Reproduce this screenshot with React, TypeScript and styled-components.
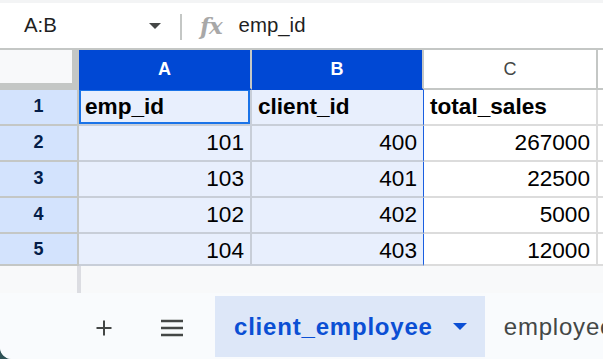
import React from 'react';
import styled, { createGlobalStyle } from 'styled-components';

const GlobalStyle = createGlobalStyle`
  html, body {
    margin: 0;
    padding: 0;
    background: #2f5256;
  }
  * {
    box-sizing: border-box;
  }
`;

type Col = 'A' | 'B' | 'C' | 'D';

const rows: { n: number; cells: [string, string, string]; header?: boolean }[] = [
  { n: 1, cells: ['emp_id', 'client_id', 'total_sales'], header: true },
  { n: 2, cells: ['101', '400', '267000'] },
  { n: 3, cells: ['103', '401', '22500'] },
  { n: 4, cells: ['102', '402', '5000'] },
  { n: 5, cells: ['104', '403', '12000'] },
];

const App: React.FC = () => {
  return (
    <>
      <GlobalStyle />
      <Page>
        <FormulaBar>
          <NameBox>
            <span>A:B</span>
            <Caret />
          </NameBox>
          <Divider />
          <Fx>fx</Fx>
          <FormulaText>emp_id</FormulaText>
        </FormulaBar>

        <Grid>
          <Corner />
          {(['A', 'B', 'C', 'D'] as Col[]).map((c) => (
            <ColHeader key={c} $selected={c === 'A' || c === 'B'} $last={c === 'D'}>
              {c === 'D' ? '' : c}
            </ColHeader>
          ))}

          {rows.map((r) => (
            <React.Fragment key={r.n}>
              <RowHeader $short={r.n === 5}>{r.n}</RowHeader>
              {r.cells.map((v, i) => (
                <Cell
                  key={i}
                  $selected={i < 2}
                  $active={r.n === 1 && i === 0}
                  $edge={i === 1}
                  $bold={!!r.header}
                >
                  {v}
                </Cell>
              ))}
              <Cell $last />
            </React.Fragment>
          ))}
        </Grid>

        <ScrollStrip>
          <StripLeft />
        </ScrollStrip>

        <TabBar>
          <IconButton aria-label="Add sheet">
            <svg width="18" height="18" viewBox="0 0 18 18">
              <path d="M9 1.5v15M1.5 9h15" stroke="#444746" strokeWidth="2" />
            </svg>
          </IconButton>
          <IconButton aria-label="All sheets">
            <svg width="24" height="18" viewBox="0 0 24 18">
              <path d="M1 2h22M1 9h22M1 16h22" stroke="#444746" strokeWidth="2.4" />
            </svg>
          </IconButton>
          <Tab $active>
            client_employee
            <TabCaret />
          </Tab>
          <Tab>employee</Tab>
        </TabBar>
      </Page>
    </>
  );
};

export default App;

const Page = styled.div`
  width: 603px;
  height: 359px;
  background: #ffffff;
  display: flex;
  flex-direction: column;
  overflow: hidden;
  border-bottom-left-radius: 12px;
  font-family: 'Liberation Sans', Arial, sans-serif;
`;

const FormulaBar = styled.div`
  height: 50px;
  flex: none;
  display: flex;
  align-items: center;
  border-top: 3px solid #f3f4f5;
  border-bottom: 2px solid #c4c7c5;
  color: #1f1f1f;
`;

const NameBox = styled.div`
  width: 180px;
  padding-left: 24px;
  padding-right: 19px;
  display: flex;
  align-items: center;
  justify-content: space-between;
  font-size: 20.4px;
`;

const Caret = styled.span`
  width: 0;
  height: 0;
  border-left: 6.5px solid transparent;
  border-right: 6.5px solid transparent;
  border-top: 6px solid #444746;
  margin-top: 1px;
`;

const Divider = styled.div`
  width: 2px;
  height: 26px;
  background: #c4c7c5;
  margin-top: 2px;
`;

const Fx = styled.span`
  font-family: 'DejaVu Serif', serif;
  font-style: italic;
  font-weight: bold;
  font-size: 23px;
  color: #a8a8a8;
  margin-left: 18px;
  margin-right: 17px;
  letter-spacing: -1px;
`;

const FormulaText = styled.span`
  font-size: 20.4px;
`;

const Grid = styled.div`
  display: grid;
  grid-template-columns: 79px 173px 172px 174px 1fr;
  grid-template-rows: 40px repeat(4, 36px) 32px;
  flex: none;
`;

const Corner = styled.div`
  background: #f8f9fa;
  border-right: 7px solid #c4c7c5;
  border-bottom: 7px solid #c4c7c5;
`;

const ColHeader = styled.div<{ $selected?: boolean; $last?: boolean }>`
  display: flex;
  align-items: center;
  justify-content: center;
  font-size: 18px;
  font-weight: ${(p) => (p.$selected ? 700 : 400)};
  color: ${(p) => (p.$selected ? '#ffffff' : '#444746')};
  background: ${(p) => (p.$selected ? '#0048d4' : '#ffffff')};
  border-right: ${(p) => (p.$last ? 'none' : '2px solid #c4c7c5')};
  border-bottom: 2px solid ${(p) => (p.$selected ? '#0048d4' : '#c4c7c5')};
`;

const RowHeader = styled.div<{ $short?: boolean }>`
  display: flex;
  align-items: center;
  justify-content: center;
  padding-bottom: ${(p) => (p.$short ? '0' : '2px')};
  background: #d3e3fd;
  color: #041e49;
  font-weight: 700;
  font-size: 18px;
  border-right: 2px solid #c4c7c5;
  border-bottom: 2px solid #c4c7c5;
`;

const Cell = styled.div<{
  $selected?: boolean;
  $active?: boolean;
  $edge?: boolean;
  $bold?: boolean;
  $last?: boolean;
}>`
  position: relative;
  background: ${(p) => (p.$selected ? '#e8effd' : '#ffffff')};
  font-size: 22.6px;
  font-weight: ${(p) => (p.$bold ? 700 : 400)};
  color: #000000;
  line-height: 34px;
  text-align: ${(p) => (p.$bold ? 'left' : 'right')};
  padding: 0 6px 0 6px;
  white-space: nowrap;
  overflow: hidden;
  border-bottom: 2px solid ${(p) => (p.$selected ? '#c8ced8' : '#dcdcdc')};
  border-right: ${(p) =>
    p.$last ? 'none' : p.$edge ? '1px solid #1a5fe0' : `2px solid ${p.$selected ? '#c8ced8' : '#dcdcdc'}`};
  ${(p) =>
    p.$active &&
    `
    &::after {
      content: '';
      position: absolute;
      inset: -1px 0 0 0;
      border: 2px solid #1a73e8;
    }
  `}
`;

const ScrollStrip = styled.div`
  height: 27px;
  flex: none;
  background: #f8f9fa;
  display: flex;
`;

const StripLeft = styled.div`
  width: 81px;
  border-right: 4px solid #dcdde2;
`;

const TabBar = styled.div`
  flex: 1;
  background: #f9fbfd;
  display: flex;
  align-items: flex-end;
  padding-left: 95px;
  overflow: hidden;
`;

const IconButton = styled.div`
  height: 61px;
  display: flex;
  align-items: center;
  justify-content: center;
  margin-right: 47px;
  padding-bottom: 2px;
  flex: none;
  &:nth-child(2) {
    margin-right: 31px;
  }
`;

const Tab = styled.div<{ $active?: boolean }>`
  height: 61px;
  margin-bottom: 2px;
  display: flex;
  align-items: center;
  flex: none;
  padding: 0 18px 0 19px;
  font-weight: ${(p) => (p.$active ? 700 : 400)};
  font-size: 24px;
  letter-spacing: 0.8px;
  color: ${(p) => (p.$active ? '#0b4fd4' : '#444746')};
  background: ${(p) => (p.$active ? '#dde7f8' : 'transparent')};
  white-space: nowrap;
`;

const TabCaret = styled.span`
  width: 0;
  height: 0;
  margin-left: 20px;
  border-left: 7px solid transparent;
  border-right: 7px solid transparent;
  border-top: 7px solid #0b4fd4;
`;
